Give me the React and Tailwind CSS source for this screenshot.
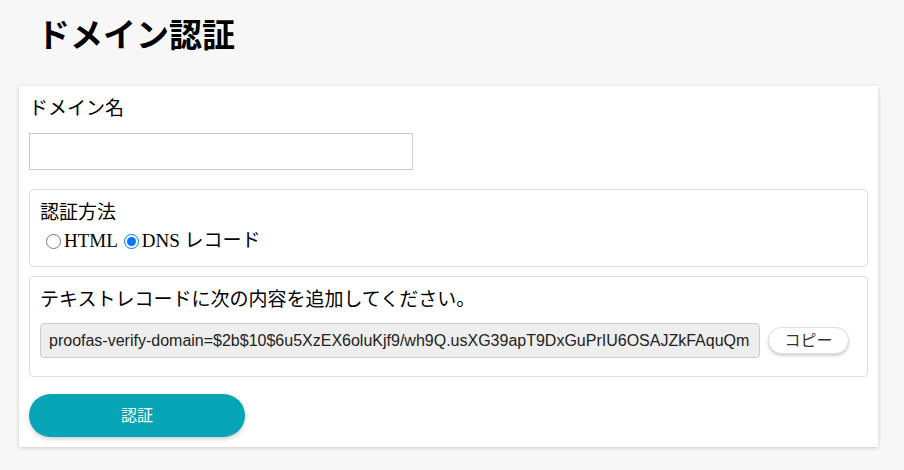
export default function App() {
  const sans = { fontFamily: '"Liberation Sans", "Noto Sans CJK JP", sans-serif' }
  return (
    <div className="min-h-[470px] bg-[#f7f7f7] text-black font-['Liberation_Sans','Noto_Sans_CJK_JP',sans-serif]">
      <h1 className="pl-[37px] pt-[17px] text-[33px] font-bold leading-[38px]">ドメイン認証</h1>

      <div className="mx-[19px] mt-[31px] w-[859px] bg-white p-[10px] shadow-[0_1px_4px_rgba(0,0,0,0.18)]">
        <div className="text-[19px] leading-[26px]">ドメイン名</div>
        <input
          type="text"
          className="mt-[11px] block h-[37px] w-[384px] border border-[#cccccc] bg-white px-2 text-[16px] outline-none"
        />

        <div className="mt-[19px] h-[78px] rounded-[4px] border border-[#dddddd] px-[10px] pt-[10px]">
          <div className="text-[19px] leading-[26px]">認証方法</div>
          <div className="mt-[3px] flex items-center text-[19px] leading-[24px] font-['Liberation_Serif','Noto_Sans_CJK_JP',serif]">
            <label className="flex items-center">
              <input type="radio" name="method" className="ml-[6px] mr-[3px] h-[15px] w-[15px]" />
              HTML
            </label>
            <label className="ml-[6px] flex items-center">
              <input type="radio" name="method" defaultChecked className="mr-[3px] h-[15px] w-[15px] accent-[#0075ff]" />
              DNS レコード
            </label>
          </div>
        </div>

        <div className="mt-[9px] rounded-[4px] border border-[#dddddd] px-[10px] pb-[18px] pt-[10px]">
          <div className="text-[19px] leading-[26px]">テキストレコードに次の内容を追加してください。</div>
          <div className="mt-[10px] flex items-center">
            <div
              className="flex h-[35px] w-[720px] items-center overflow-hidden whitespace-nowrap rounded-[4px] border border-[#cccccc] bg-[#eeeeee] pl-[8px] text-[16px] text-[#222]"
              style={sans}
            >
              proofas-verify-domain=$2b$10$6u5XzEX6oluKjf9/wh9Q.usXG39apT9DxGuPrIU6OSAJZkFAquQm
            </div>
            <button className="ml-[8px] h-[27px] w-[81px] rounded-full border border-[#dddddd] bg-white text-[16px] text-[#333] shadow-[0_2px_3px_rgba(0,0,0,0.18)]">
              コピー
            </button>
          </div>
        </div>

        <button className="mt-[17px] h-[43px] w-[216px] rounded-full bg-[#06a4b5] text-[16px] text-white shadow-[0_2px_4px_rgba(0,0,0,0.2)]">
          認証
        </button>
      </div>
    </div>
  )
}
